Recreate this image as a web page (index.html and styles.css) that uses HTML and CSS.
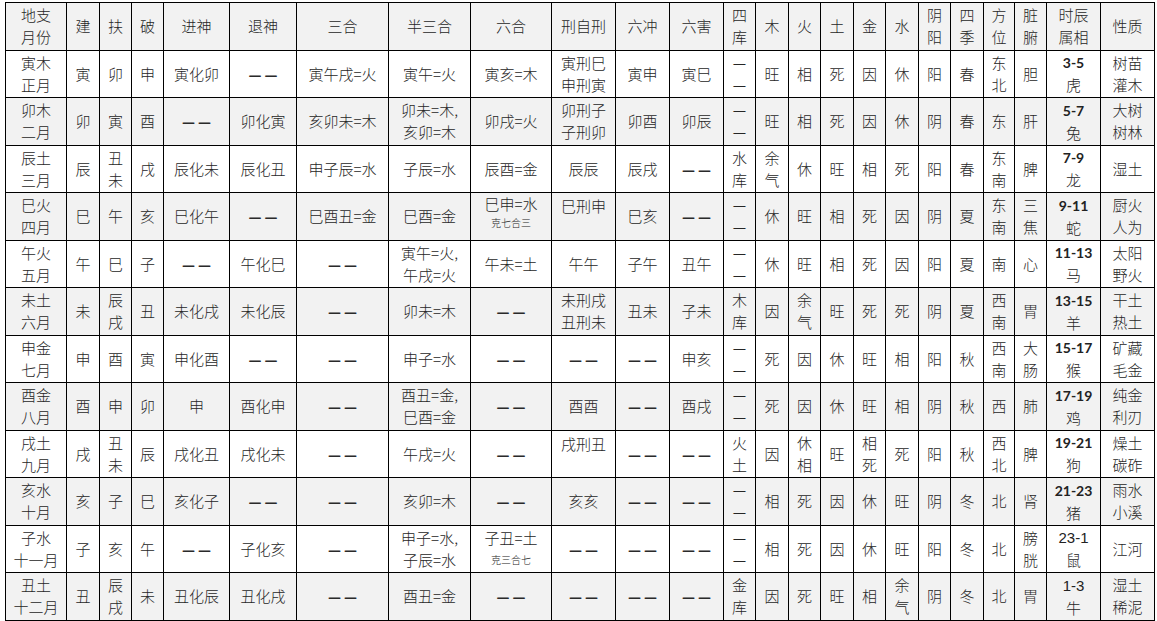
FILE: index.html
```html
<!DOCTYPE html>
<html lang="zh-CN">
<head>
<meta charset="utf-8">
<title>地支表</title>
<link rel="stylesheet" href="styles.css">
</head>
<body>
<table class="sheet">
<colgroup>
<col style="width:61px"><col style="width:33px"><col style="width:32px"><col style="width:32px"><col style="width:66px"><col style="width:67px"><col style="width:92px"><col style="width:82px"><col style="width:81px"><col style="width:64px"><col style="width:54px"><col style="width:54px"><col style="width:32px"><col style="width:33px"><col style="width:32px"><col style="width:33px"><col style="width:32px"><col style="width:33px"><col style="width:32px"><col style="width:33px"><col style="width:31px"><col style="width:32px"><col style="width:54px"><col style="width:54px">
</colgroup>
<tbody>
<tr class="alt">
<td>地支<br>月份</td><td>建</td><td>扶</td><td>破</td><td>进神</td><td>退神</td><td>三合</td><td>半三合</td><td>六合</td><td>刑自刑</td><td>六冲</td><td>六害</td><td>四<br>库</td><td>木</td><td>火</td><td>土</td><td>金</td><td>水</td><td>阴<br>阳</td><td>四<br>季</td><td>方<br>位</td><td>脏<br>腑</td><td>时辰<br>属相</td><td>性质</td>
</tr>
<tr>
<td>寅木<br>正月</td><td>寅</td><td>卯</td><td>申</td><td>寅化卯</td><td><span class="dash"><span>—</span><span>—</span></span></td><td>寅午戌=火</td><td>寅午=火</td><td>寅亥=木</td><td>寅刑巳<br>申刑寅</td><td>寅申</td><td>寅巳</td><td class="ku">—<br>—</td><td>旺</td><td>相</td><td>死</td><td>因</td><td>休</td><td>阳</td><td>春</td><td>东<br>北</td><td>胆</td><td><span class="num">3-5</span><br>虎</td><td>树苗<br>灌木</td>
</tr>
<tr class="alt">
<td>卯木<br>二月</td><td>卯</td><td>寅</td><td>酉</td><td><span class="dash"><span>—</span><span>—</span></span></td><td>卯化寅</td><td>亥卯未=木</td><td>卯未=木,<br>亥卯=木</td><td>卯戌=火</td><td>卯刑子<br>子刑卯</td><td>卯酉</td><td>卯辰</td><td class="ku">—<br>—</td><td>旺</td><td>相</td><td>死</td><td>因</td><td>休</td><td>阴</td><td>春</td><td>东</td><td>肝</td><td><span class="num">5-7</span><br>兔</td><td>大树<br>树林</td>
</tr>
<tr>
<td>辰土<br>三月</td><td>辰</td><td>丑<br>未</td><td>戌</td><td>辰化未</td><td>辰化丑</td><td>申子辰=水</td><td>子辰=水</td><td>辰酉=金</td><td>辰辰</td><td>辰戌</td><td><span class="dash"><span>—</span><span>—</span></span></td><td>水<br>库</td><td>余<br>气</td><td>休</td><td>旺</td><td>相</td><td>死</td><td>阳</td><td>春</td><td>东<br>南</td><td>脾</td><td><span class="num">7-9</span><br>龙</td><td>湿土</td>
</tr>
<tr class="alt">
<td>巳火<br>四月</td><td>巳</td><td>午</td><td>亥</td><td>巳化午</td><td><span class="dash"><span>—</span><span>—</span></span></td><td>巳酉丑=金</td><td>巳酉=金</td><td class="tight"><div class="main">巳申=水</div><div class="note">克七合三</div></td><td class="top">巳刑申</td><td>巳亥</td><td><span class="dash"><span>—</span><span>—</span></span></td><td class="ku">—<br>—</td><td>休</td><td>旺</td><td>相</td><td>死</td><td>因</td><td>阴</td><td>夏</td><td>东<br>南</td><td>三<br>焦</td><td><span class="num">9-11</span><br>蛇</td><td>厨火<br>人为</td>
</tr>
<tr>
<td>午火<br>五月</td><td>午</td><td>巳</td><td>子</td><td><span class="dash"><span>—</span><span>—</span></span></td><td>午化巳</td><td><span class="dash"><span>—</span><span>—</span></span></td><td>寅午=火,<br>午戌=火</td><td>午未=土</td><td>午午</td><td>子午</td><td>丑午</td><td class="ku">—<br>—</td><td>休</td><td>旺</td><td>相</td><td>死</td><td>因</td><td>阳</td><td>夏</td><td>南</td><td>心</td><td><span class="num">11-13</span><br>马</td><td>太阳<br>野火</td>
</tr>
<tr class="alt">
<td>未土<br>六月</td><td>未</td><td>辰<br>戌</td><td>丑</td><td>未化戌</td><td>未化辰</td><td><span class="dash"><span>—</span><span>—</span></span></td><td>卯未=木</td><td><span class="dash"><span>—</span><span>—</span></span></td><td>未刑戌<br>丑刑未</td><td>丑未</td><td>子未</td><td>木<br>库</td><td>因</td><td>余<br>气</td><td>旺</td><td>死</td><td>死</td><td>阴</td><td>夏</td><td>西<br>南</td><td>胃</td><td><span class="num">13-15</span><br>羊</td><td>干土<br>热土</td>
</tr>
<tr>
<td>申金<br>七月</td><td>申</td><td>酉</td><td>寅</td><td>申化酉</td><td><span class="dash"><span>—</span><span>—</span></span></td><td><span class="dash"><span>—</span><span>—</span></span></td><td>申子=水</td><td><span class="dash"><span>—</span><span>—</span></span></td><td><span class="dash"><span>—</span><span>—</span></span></td><td><span class="dash"><span>—</span><span>—</span></span></td><td>申亥</td><td class="ku">—<br>—</td><td>死</td><td>因</td><td>休</td><td>旺</td><td>相</td><td>阳</td><td>秋</td><td>西<br>南</td><td>大<br>肠</td><td><span class="num">15-17</span><br>猴</td><td>矿藏<br>毛金</td>
</tr>
<tr class="alt">
<td>酉金<br>八月</td><td>酉</td><td>申</td><td>卯</td><td>申</td><td>酉化申</td><td><span class="dash"><span>—</span><span>—</span></span></td><td>酉丑=金,<br>巳酉=金</td><td><span class="dash"><span>—</span><span>—</span></span></td><td>酉酉</td><td><span class="dash"><span>—</span><span>—</span></span></td><td>酉戌</td><td class="ku">—<br>—</td><td>死</td><td>因</td><td>休</td><td>旺</td><td>相</td><td>阴</td><td>秋</td><td>西</td><td>肺</td><td><span class="num">17-19</span><br>鸡</td><td>纯金<br>利刃</td>
</tr>
<tr>
<td>戌土<br>九月</td><td>戌</td><td>丑<br>未</td><td>辰</td><td>戌化丑</td><td>戌化未</td><td><span class="dash"><span>—</span><span>—</span></span></td><td>午戌=火</td><td><span class="dash"><span>—</span><span>—</span></span></td><td class="top">戌刑丑</td><td><span class="dash"><span>—</span><span>—</span></span></td><td><span class="dash"><span>—</span><span>—</span></span></td><td>火<br>土</td><td>因</td><td>休<br>相</td><td>旺</td><td>相<br>死</td><td>死</td><td>阳</td><td>秋</td><td>西<br>北</td><td>脾</td><td><span class="num">19-21</span><br>狗</td><td>燥土<br>碳砟</td>
</tr>
<tr class="alt">
<td>亥水<br>十月</td><td>亥</td><td>子</td><td>巳</td><td>亥化子</td><td><span class="dash"><span>—</span><span>—</span></span></td><td><span class="dash"><span>—</span><span>—</span></span></td><td>亥卯=木</td><td><span class="dash"><span>—</span><span>—</span></span></td><td>亥亥</td><td><span class="dash"><span>—</span><span>—</span></span></td><td><span class="dash"><span>—</span><span>—</span></span></td><td class="ku">—<br>—</td><td>相</td><td>死</td><td>因</td><td>休</td><td>旺</td><td>阴</td><td>冬</td><td>北</td><td>肾</td><td><span class="num">21-23</span><br>猪</td><td>雨水<br>小溪</td>
</tr>
<tr>
<td>子水<br>十一月</td><td>子</td><td>亥</td><td>午</td><td><span class="dash"><span>—</span><span>—</span></span></td><td>子化亥</td><td><span class="dash"><span>—</span><span>—</span></span></td><td>申子=水,<br>子辰=水</td><td><div>子丑=土</div><div class="note wide">克三合七</div></td><td><span class="dash"><span>—</span><span>—</span></span></td><td><span class="dash"><span>—</span><span>—</span></span></td><td><span class="dash"><span>—</span><span>—</span></span></td><td class="ku">—<br>—</td><td>相</td><td>死</td><td>因</td><td>休</td><td>旺</td><td>阳</td><td>冬</td><td>北</td><td>膀<br>胱</td><td><span class="num arial">23-1</span><br>鼠</td><td>江河</td>
</tr>
<tr class="alt">
<td>丑土<br>十二月</td><td>丑</td><td>辰<br>戌</td><td>未</td><td>丑化辰</td><td>丑化戌</td><td><span class="dash"><span>—</span><span>—</span></span></td><td>酉丑=金</td><td><span class="dash"><span>—</span><span>—</span></span></td><td><span class="dash"><span>—</span><span>—</span></span></td><td><span class="dash"><span>—</span><span>—</span></span></td><td><span class="dash"><span>—</span><span>—</span></span></td><td>金<br>库</td><td>因</td><td>死</td><td>旺</td><td>相</td><td>余<br>气</td><td>阴</td><td>冬</td><td>北</td><td>胃</td><td><span class="num arial">1-3</span><br>牛</td><td>湿土<br>稀泥</td>
</tr>
</tbody>
</table>
</body>
</html>
```

FILE: styles.css
```css
html, body {
  margin: 0;
  padding: 0;
  background: #ffffff;
}

.sheet {
  margin: 2px 0 0 5px;
  width: 1150px;
  border-collapse: collapse;
  table-layout: fixed;
  font-family: "Noto Sans CJK SC", "Noto Sans", sans-serif;
  font-size: 15px;
  font-weight: 300;
  color: #262626;
}

.sheet tr {
  height: 47.5px;
}

.sheet td {
  border: 1px solid #000000;
  padding: 0;
  text-align: center;
  vertical-align: middle;
  line-height: 22px;
  white-space: nowrap;
  overflow: hidden;
}

.sheet tr.alt td {
  background: #f2f2f2;
}

.sheet td.top {
  vertical-align: top;
  padding-top: 2px;
}

.sheet td.tight {
  vertical-align: top;
  padding-top: 0;
}

.tight .main {
  line-height: 22px;
}

.note {
  font-size: 10px;
  line-height: 15px;
}

.note.wide {
  line-height: 22px;
}

.dash {
  display: inline-flex;
  gap: 3px;
  align-items: center;
  color: #2a2a2a;
}

.dash span {
  display: block;
  font-family: "DejaVu Sans", sans-serif;
  font-size: 13px;
  font-weight: 700;
  line-height: 22px;
  position: relative;
  top: 1px;
}

.ku {
  font-weight: 400;
}

.num {
  font-family: "Lato", "Open Sans", sans-serif;
  font-weight: 700;
  font-size: 14px;
  color: #222222;
}

.num.arial {
  font-family: "Liberation Sans", Arial, sans-serif;
  font-weight: 400;
  font-size: 15px;
}
```
